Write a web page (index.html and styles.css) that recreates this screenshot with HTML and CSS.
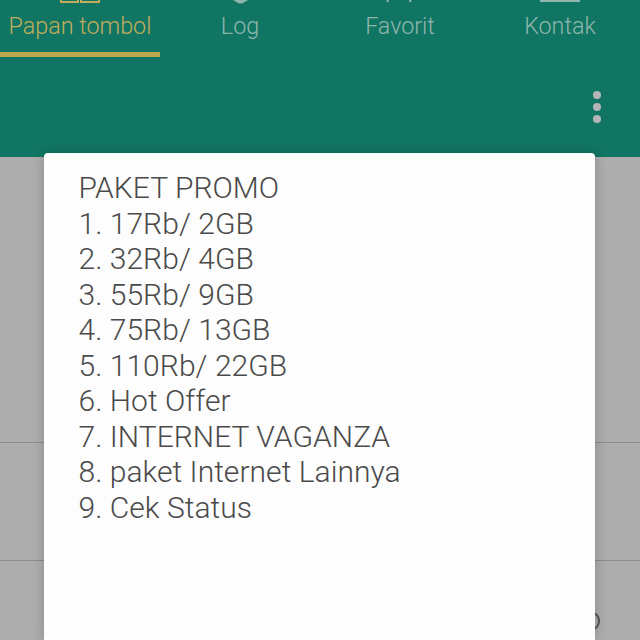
FILE: index.html
```html
<!DOCTYPE html>
<html lang="id">
<head>
<meta charset="utf-8">
<title>Paket Promo</title>
<link rel="stylesheet" href="styles.css">
</head>
<body>
<header class="appbar">
  <nav class="tabs">
    <div class="tab active">
      <svg class="tab-icon" width="40" height="6" viewBox="0 0 40 6"><path d="M1 0v2h17V0M21 0v2h18V0" fill="none" stroke="currentColor" stroke-width="2"/></svg>
      <span>Papan tombol</span>
    </div>
    <div class="tab">
      <svg class="tab-icon" width="40" height="6" viewBox="0 0 40 6"><path d="M13 0h15l-5 3q-2.500 1-5 0z" fill="currentColor"/></svg>
      <span>Log</span>
    </div>
    <div class="tab">
      <svg class="tab-icon" width="40" height="6" viewBox="0 0 40 6"><path d="M7 0l1.500 2M31 0l-1.500 2" fill="none" stroke="currentColor" stroke-width="2"/></svg>
      <span>Favorit</span>
    </div>
    <div class="tab">
      <svg class="tab-icon" width="40" height="6" viewBox="0 0 40 6"><path d="M0 0h40v2H0z" fill="currentColor"/></svg>
      <span>Kontak</span>
    </div>
  </nav>
  <div class="toolbar">
    <div class="more"><i></i><i></i><i></i></div>
  </div>
</header>
<main class="backdrop">
  <div class="row"></div>
  <div class="row"></div>
  <span class="peek"></span>
  <section class="dialog">
    <p>PAKET PROMO</p>
    <p>1. 17Rb/ 2GB</p>
    <p>2. 32Rb/ 4GB</p>
    <p>3. 55Rb/ 9GB</p>
    <p>4. 75Rb/ 13GB</p>
    <p>5. 110Rb/ 22GB</p>
    <p>6. Hot Offer</p>
    <p>7. INTERNET VAGANZA</p>
    <p>8. paket Internet Lainnya</p>
    <p>9. Cek Status</p>
  </section>
</main>
</body>
</html>
```
FILE: styles.css
```css
* { box-sizing: border-box; }
html, body { margin: 0; height: 640px; overflow: hidden; }
body { background: #adadad; font-family: Roboto, "Liberation Sans", sans-serif; }
.appbar { height: 157px; background: #107562; color: #8fb6ad; }
.tabs { display: flex; height: 57px; }
.tab { flex: 1; display: flex; flex-direction: column; align-items: center; font-size: 23.300px; line-height: 28px; font-weight: 300; }
.tab-icon { display: block; height: 6px; margin-bottom: 6px; }
.tab.active { color: #c0ad5c; border-bottom: 5px solid #bba84f; }
.toolbar { display: flex; justify-content: flex-end; padding: 34px 39px 0 0; }
.more { display: flex; flex-direction: column; gap: 4px; }
.more i { width: 8px; height: 8px; border-radius: 50%; background: #b5b5b8; }
.backdrop { position: relative; height: 483px; padding-top: 285px; display: flex; flex-direction: column; gap: 117px; }
.row { flex: none; height: 1px; background: #8c8c8c; }
.peek { position: absolute; left: 585px; top: 455px; width: 15px; height: 18px; border: 2px solid #555; border-radius: 50%; }
.dialog { position: absolute; left: 44px; top: -4px; width: 551px; height: 487px; padding: 17px 35px 0 34.500px; background: #fdfdfd; border-radius: 4px 4px 0 0; box-shadow: 0 0 12px rgba(0,0,0,.22); color: #4a4a4a; font-size: 30px; line-height: 35.500px; font-weight: 300; letter-spacing: .04px; }
.dialog p { margin: 0; }
```
